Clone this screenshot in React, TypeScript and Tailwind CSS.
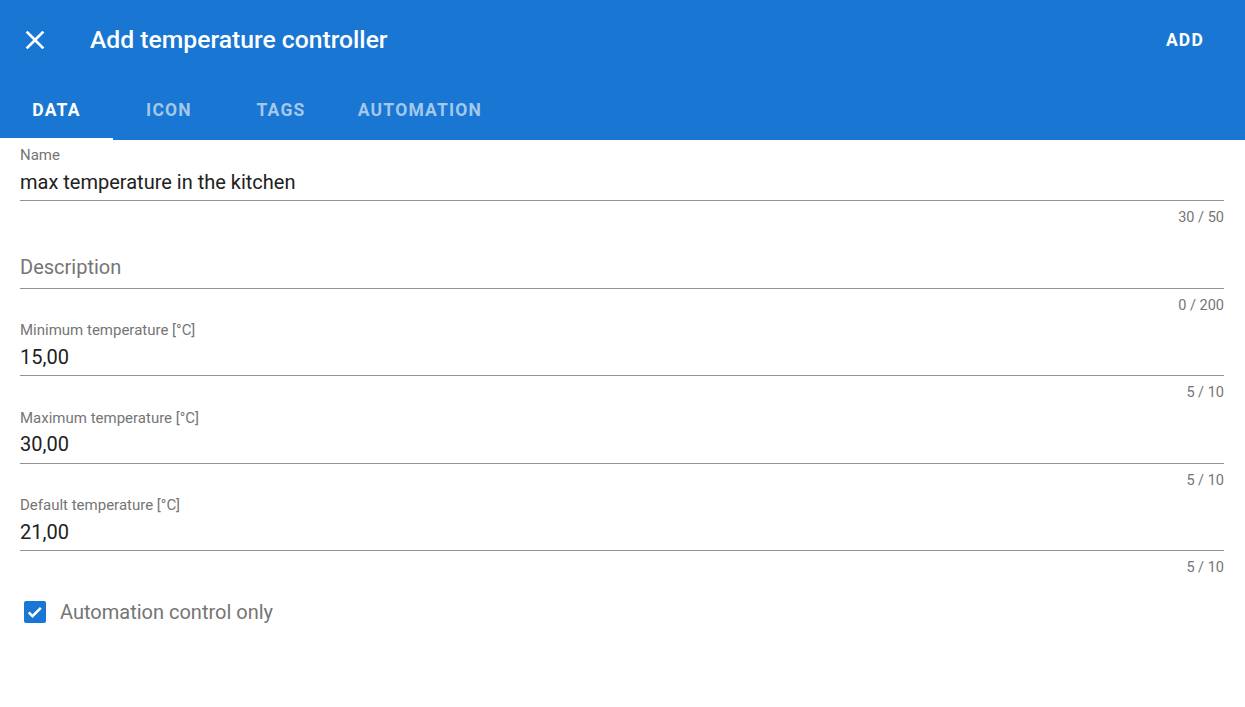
import React from 'react';

interface FieldProps {
  label: string;
  value?: string;
  placeholder?: string;
  counter: string;
}

const Field: React.FC<FieldProps> = ({ label, value, placeholder, counter }) => (
  <div className="flex flex-col mb-[8.5px]">
    <div className="h-[16px] text-[15px] leading-[16px] text-[#757575]">{value ? label : ''}</div>
    <div className="h-[38px] flex items-center border-b border-[#949494] text-[20px]">
      {value ? (
        <span className="text-[#212121]">{value}</span>
      ) : (
        <span className="text-[#757575] -mt-[4px]">{placeholder}</span>
      )}
    </div>
    <div className="mt-[9px] h-[16px] text-[14.5px] leading-[16px] text-[#757575] text-right">{counter}</div>
  </div>
);

const tabs = [
  { name: 'DATA', w: 'w-[113px]', active: true },
  { name: 'ICON', w: 'w-[112px]', active: false },
  { name: 'TAGS', w: 'w-[112px]', active: false },
  { name: 'AUTOMATION', w: 'w-[166px]', active: false },
];

export default function App() {
  return (
    <div className="w-[1245px] h-[707px] bg-white overflow-hidden" style={{ fontFamily: 'Roboto, "Noto Sans", sans-serif' }}>
      <div className="bg-[#1976d2] h-[140px] flex flex-col">
        <div className="h-[80px] flex items-center">
          <button className="ml-[19px] w-[32px] h-[32px] flex items-center justify-center text-white">
            <svg viewBox="0 0 24 24" width="32" height="32" fill="currentColor">
              <path d="M19 6.41L17.59 5 12 10.59 6.41 5 5 6.41 10.59 12 5 17.59 6.41 19 12 13.41 17.59 19 19 17.59 13.41 12z" />
            </svg>
          </button>
          <h1 className="ml-[39px] text-white text-[24.7px] font-medium">Add temperature controller</h1>
          <button className="ml-auto mr-[41px] text-white text-[17.5px] font-bold tracking-[1.2px]">ADD</button>
        </div>
        <div className="h-[60px] flex">
          {tabs.map(t => (
            <div
              key={t.name}
              className={`${t.w} flex items-center justify-center relative text-[17.5px] font-bold tracking-[1.2px] ${
                t.active ? 'text-white' : 'text-[#a3c8ec]'
              }`}
            >
              {t.name}
              {t.active && <div className="absolute bottom-0 left-0 right-0 h-[2px] bg-white" />}
            </div>
          ))}
        </div>
      </div>
      <div className="pl-[20px] pr-[21px] pt-[7px]">
        <Field label="Name" value="max temperature in the kitchen" counter="30 / 50" />
        <Field label="Description" placeholder="Description" counter="0 / 200" />
        <Field label="Minimum temperature [°C]" value="15,00" counter="5 / 10" />
        <Field label="Maximum temperature [°C]" value="30,00" counter="5 / 10" />
        <Field label="Default temperature [°C]" value="21,00" counter="5 / 10" />
        <label className="flex items-center mt-[17px] h-[38px]">
          <span className="ml-[4px] w-[22px] h-[22px] rounded-[2px] bg-[#1976d2] flex items-center justify-center">
            <svg viewBox="0 0 24 24" width="20" height="20" fill="none" stroke="white" strokeWidth="3">
              <path d="M4.5 12.5l4.5 4.5 10-10" />
            </svg>
          </span>
          <span className="ml-[14px] text-[20px] text-[#757575]">Automation control only</span>
        </label>
      </div>
    </div>
  );
}
